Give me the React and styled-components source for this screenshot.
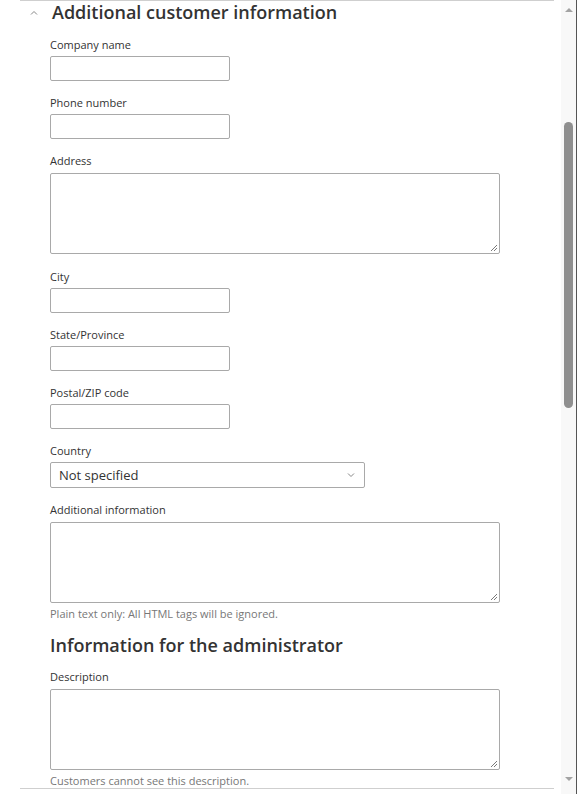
import React from "react";
import styled, { createGlobalStyle } from "styled-components";

const Global = createGlobalStyle`
  html, body { margin: 0; padding: 0; background: #fff; }
  body { font-family: "Open Sans", "Noto Sans", sans-serif; color: #333; overflow: hidden; }
  * { box-sizing: border-box; }
`;

const Page = styled.div`
  display: flex;
  width: 577px;
  height: 794px;
  overflow: hidden;
`;

const Content = styled.div`
  flex: 1;
  padding: 0 7px 0 20px;
`;

const Section = styled.section`
  border-top: 1px solid #cfcfcf;
  border-bottom: 1px solid #cfcfcf;
`;

const SectionHeader = styled.div`
  display: flex;
  align-items: center;
  height: 25px;
  padding: 0 0 4px 9px;
`;

const Chevron = styled.svg`
  width: 10px;
  height: 10px;
  margin-right: 13px;
  margin-top: 2px;
`;

const H2 = styled.h2`
  margin: 0;
  font-size: 18px;
  font-weight: 600;
  color: #333;
`;

const Body = styled.div`
  padding: 11px 0 0 30px;
`;

const Field = styled.div`
  display: flex;
  flex-direction: column;
  align-items: flex-start;
  margin-bottom: ${(p) => (p.$hint ? "0" : p.$wide ? "15px" : "14px")};
`;

const Label = styled.label`
  font-size: 11px;
  line-height: 16px;
  color: #333;
  margin-bottom: ${(p) => (p.$wide ? "4px" : "3px")};
`;

const Input = styled.div`
  width: 180px;
  height: 25px;
  border: 1px solid #a9a9a9;
  border-radius: 2px;
  background: #fff;
`;

const TextArea = styled.div`
  position: relative;
  width: 450px;
  height: 81px;
  border: 1px solid #a9a9a9;
  border-radius: 2px;
  background: #fff;
`;

const Grip = styled.svg`
  position: absolute;
  right: 1px;
  bottom: 1px;
  width: 8px;
  height: 8px;
`;

const Select = styled.div`
  width: 315px;
  height: 26px;
  border: 1px solid #a9a9a9;
  border-radius: 2px;
  display: flex;
  align-items: center;
  justify-content: space-between;
  padding: 0 8px;
  font-size: 13px;
  color: #333;
`;

const Hint = styled.div`
  font-size: 11px;
  line-height: 14px;
  color: #777;
  margin-top: 4px;
`;

const H3 = styled.h3`
  margin: 12px 0 12px;
  font-size: 18px;
  font-weight: 600;
  color: #333;
  line-height: 24px;
`;

const Scrollbar = styled.div`
  width: 16px;
  background: #f8f8f8;
  border-right: 1px solid #555;
  display: flex;
  flex-direction: column;
  align-items: center;
`;

const Arrow = styled.div`
  width: 0;
  height: 0;
  border-left: 4px solid transparent;
  border-right: 4px solid transparent;
  ${(p) =>
    p.$down
      ? "border-top: 4px solid #a3a3a3; margin-top: auto; margin-bottom: 13px;"
      : "border-bottom: 4px solid #a3a3a3; margin-top: 8px;"}
`;

const Thumb = styled.div`
  width: 9px;
  height: 286px;
  margin-top: 110px;
  margin-right: 1px;
  background: #8f8f8f;
  border-radius: 5px;
`;

const GripIcon = () => (
  <Grip viewBox="0 0 8 8">
    <path d="M7 1 L1 7 M7 4 L4 7" stroke="#7a7a7a" strokeWidth="1" />
  </Grip>
);

const Text = ({ label }) => (
  <Field>
    <Label>{label}</Label>
    <Input />
  </Field>
);

const Area = ({ label, hint }) => (
  <Field $hint={!!hint} $wide>
    <Label $wide>{label}</Label>
    <TextArea>
      <GripIcon />
    </TextArea>
    {hint && <Hint>{hint}</Hint>}
  </Field>
);

export default function App() {
  return (
    <>
      <Global />
      <Page>
        <Content>
          <Section>
            <SectionHeader>
              <Chevron viewBox="0 0 10 10">
                <path d="M2 6.5 L5 3.5 L8 6.5" fill="none" stroke="#888" strokeWidth="1" />
              </Chevron>
              <H2>Additional customer information</H2>
            </SectionHeader>
            <Body>
              <Text label="Company name" />
              <Text label="Phone number" />
              <Area label="Address" />
              <Text label="City" />
              <Text label="State/Province" />
              <Text label="Postal/ZIP code" />
              <Field>
                <Label>Country</Label>
                <Select>
                  <span>Not specified</span>
                  <svg width="10" height="10" viewBox="0 0 10 10">
                    <path d="M2 3.5 L5 6.5 L8 3.5" fill="none" stroke="#888" strokeWidth="1" />
                  </svg>
                </Select>
              </Field>
              <Area label="Additional information" hint="Plain text only: All HTML tags will be ignored." />
              <H3>Information for the administrator</H3>
              <Area label="Description" hint="Customers cannot see this description." />
            </Body>
          </Section>
        </Content>
        <Scrollbar>
          <Arrow />
          <Thumb />
          <Arrow $down />
        </Scrollbar>
      </Page>
    </>
  );
}
